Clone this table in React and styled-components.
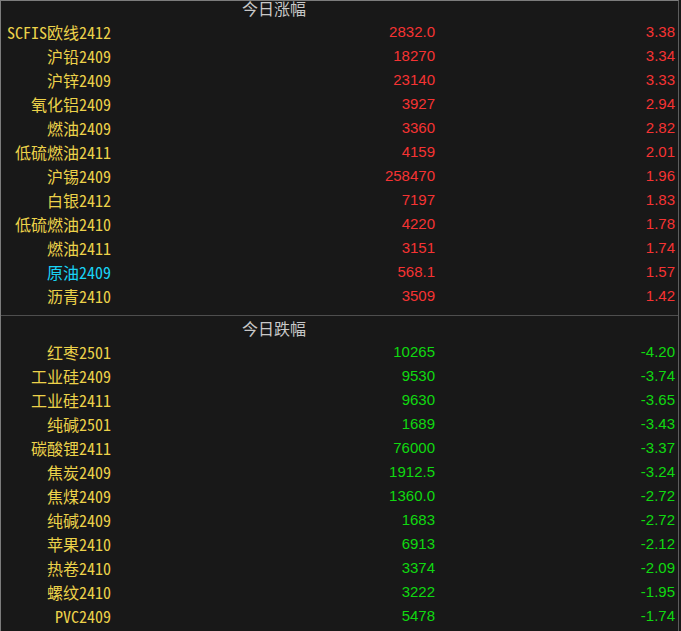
import React from "react";
import styled, { createGlobalStyle } from "styled-components";

const GlobalStyle = createGlobalStyle`
  html, body {
    margin: 0;
    padding: 0;
    background: #181818;
  }
`;

const Panel = styled.div`
  width: 679px;
  height: 631px;
  box-sizing: border-box;
  border-top: 1px solid #7c7c7c;
  border-left: 1px solid #7c7c7c;
  border-right: 1px solid #5c5c5c;
  background: #181818;
  overflow: hidden;
`;

/* list is scrolled a few pixels down */
const Scroller = styled.div`
  margin-top: -5px;
`;

const Section = styled.div`
  padding-bottom: 7px;
  border-bottom: ${(props) => (props.divider ? "1px solid #4e4e4e" : "none")};
`;

const Row = styled.div`
  display: grid;
  grid-template-columns: 111px 324px 1fr;
  height: 24px;
  align-items: center;
`;

const Title = styled.div`
  grid-column: 2;
  text-align: center;
  font-family: "Noto Sans CJK SC", sans-serif;
  font-size: 16px;
  color: #c8c8c8;
  line-height: 24px;
`;

const Name = styled.div`
  text-align: right;
  padding-right: 1px;
  font-family: "Noto Sans Mono CJK SC", "Noto Sans CJK SC", monospace;
  font-size: 16px;
  color: ${(props) => (props.hl ? "#19d3f5" : "#ecd24a")};
  line-height: 24px;
  white-space: nowrap;
`;

const Num = styled.div`
  text-align: right;
  font-family: "Liberation Sans", Arial, sans-serif;
  font-size: 15px;
  color: ${(props) => (props.down ? "#10d810" : "#f53333")};
  padding-right: ${(props) => (props.last ? "3px" : "1px")};
  margin-top: -1px;
`;

const up = [
  ["SCFIS欧线2412", "2832.0", "3.38"],
  ["沪铅2409", "18270", "3.34"],
  ["沪锌2409", "23140", "3.33"],
  ["氧化铝2409", "3927", "2.94"],
  ["燃油2409", "3360", "2.82"],
  ["低硫燃油2411", "4159", "2.01"],
  ["沪锡2409", "258470", "1.96"],
  ["白银2412", "7197", "1.83"],
  ["低硫燃油2410", "4220", "1.78"],
  ["燃油2411", "3151", "1.74"],
  ["原油2409", "568.1", "1.57", true],
  ["沥青2410", "3509", "1.42"],
];

const down = [
  ["红枣2501", "10265", "-4.20"],
  ["工业硅2409", "9530", "-3.74"],
  ["工业硅2411", "9630", "-3.65"],
  ["纯碱2501", "1689", "-3.43"],
  ["碳酸锂2411", "76000", "-3.37"],
  ["焦炭2409", "1912.5", "-3.24"],
  ["焦煤2409", "1360.0", "-2.72"],
  ["纯碱2409", "1683", "-2.72"],
  ["苹果2410", "6913", "-2.12"],
  ["热卷2410", "3374", "-2.09"],
  ["螺纹2410", "3222", "-1.95"],
  ["PVC2409", "5478", "-1.74"],
];

const Block = ({ title, rows, down, divider }) => (
  <Section divider={divider}>
    <Row>
      <Title>{title}</Title>
    </Row>
    {rows.map(([name, price, pct, hl]) => (
      <Row key={name}>
        <Name hl={hl}>{name}</Name>
        <Num down={down}>{price}</Num>
        <Num down={down} last>{pct}</Num>
      </Row>
    ))}
  </Section>
);

export default function App() {
  return (
    <>
      <GlobalStyle />
      <Panel>
        <Scroller>
          <Block title="今日涨幅" rows={up} divider />
          <Block title="今日跌幅" rows={down} down />
        </Scroller>
      </Panel>
    </>
  );
}
